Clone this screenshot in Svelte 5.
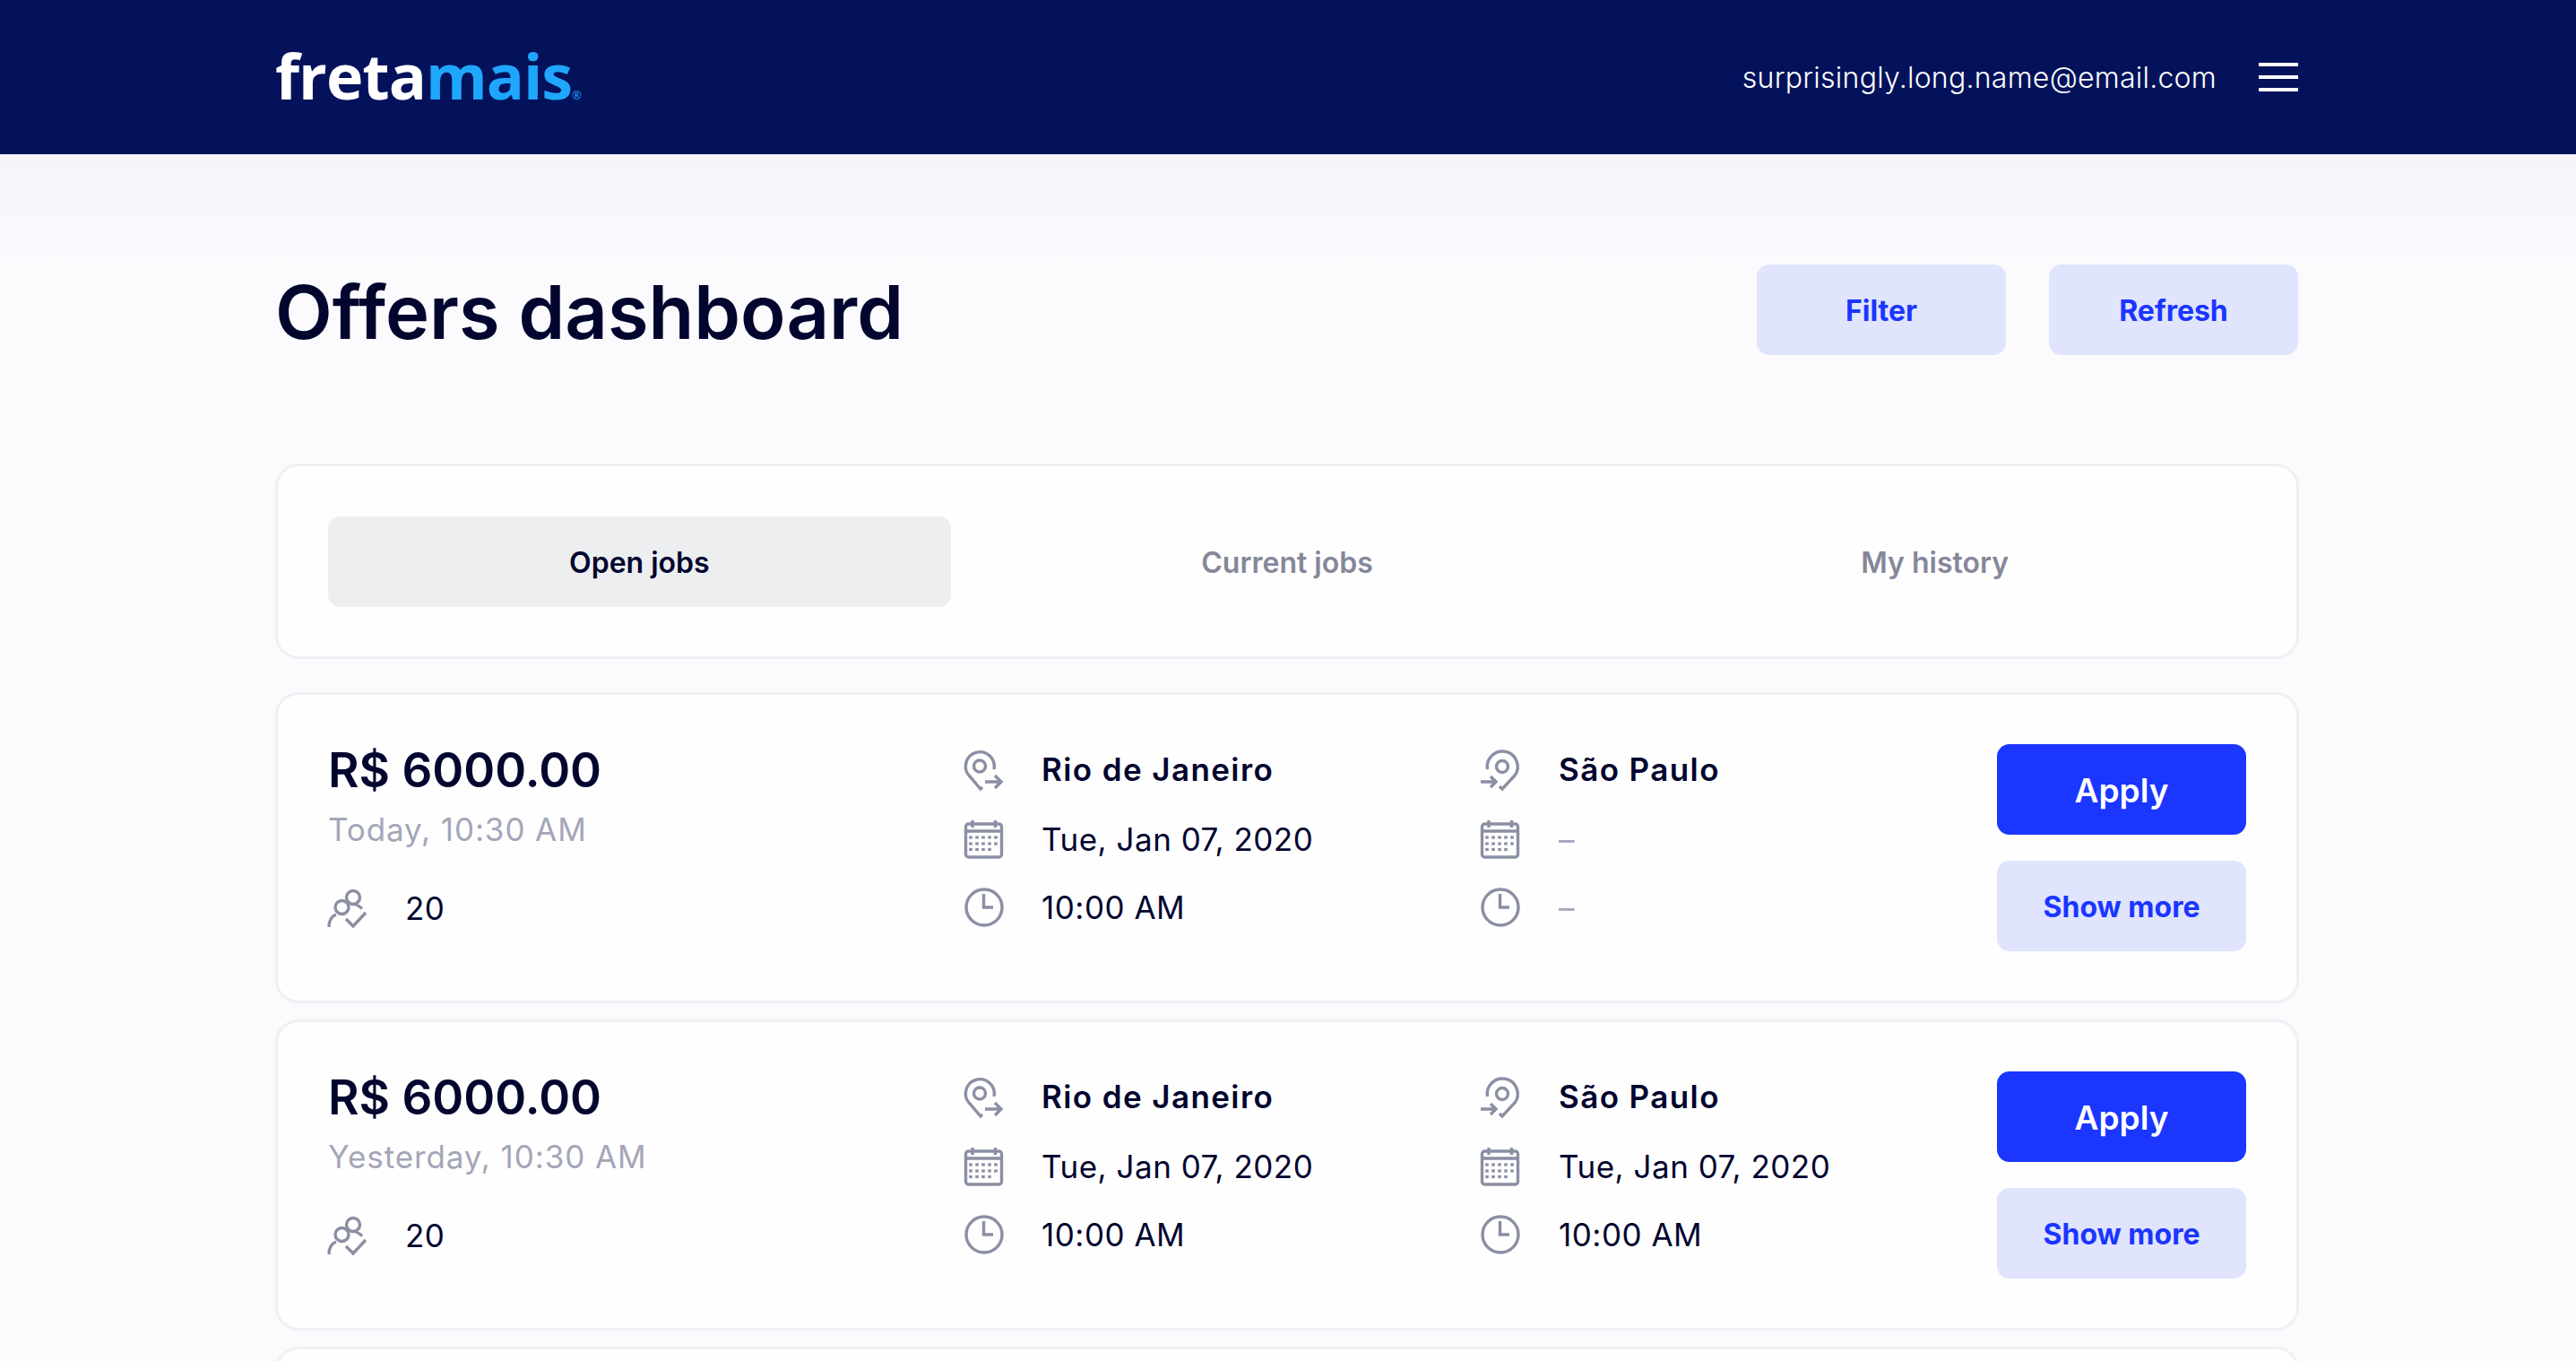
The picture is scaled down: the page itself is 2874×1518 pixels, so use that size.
<script lang="ts">
  interface Offer {
    posted: string;
    seats: number;
    origin: string;
    destination: string;
    startDate: string;
    startTime: string;
    endDate: string;
    endTime: string;
  }

  const tabs = ['Open jobs', 'Current jobs', 'My history'];
  let activeTab = $state('Open jobs');

  const offers: Offer[] = [
    { posted: 'Today, 10:30 AM', seats: 20, origin: 'Rio de Janeiro', destination: 'São Paulo', startDate: 'Tue, Jan 07, 2020', startTime: '10:00 AM', endDate: '–', endTime: '–' },
    { posted: 'Yesterday, 10:30 AM', seats: 20, origin: 'Rio de Janeiro', destination: 'São Paulo', startDate: 'Tue, Jan 07, 2020', startTime: '10:00 AM', endDate: 'Tue, Jan 07, 2020', endTime: '10:00 AM' },
  ];

  const calendarDots = [
    [7, 20], [14, 20], [21, 20], [28, 20], [35, 20],
    [7, 27], [14, 27], [21, 27], [28, 27], [35, 27],
    [7, 33.5], [14, 33.5], [21, 33.5], [28, 33.5],
  ];
</script>

{#snippet pinFrom()}
  <svg class="icon" viewBox="0 0 44 44">
    <path d="M33 21A16 16 0 1 0 6 29L18 43L20 41" />
    <circle cx="17" cy="17.5" r="6.5" />
    <path d="M23 35H41M34 28L41 35L34 42" />
  </svg>
{/snippet}

{#snippet pinTo()}
  <svg class="icon" viewBox="0 0 44 44">
    <path d="M7.5 21A17 17 0 1 1 38 28L24 43L21 40" />
    <circle cx="24" cy="18" r="6.5" />
    <path d="M0 35H17M11 29L17 35L11 41" />
  </svg>
{/snippet}

{#snippet calendar()}
  <svg class="icon" viewBox="0 0 44 44">
    <rect x="1.5" y="5" width="40" height="37" rx="3" />
    <path d="M1.5 13H41.5M9 1V9M34.5 1V9" />
    {#each calendarDots as [x, y]}
      <rect class="dot" x={x - 1.8} y={y - 1.6} width="3.6" height="3.2" />
    {/each}
  </svg>
{/snippet}

{#snippet clock()}
  <svg class="icon" viewBox="0 0 44 44">
    <circle cx="22" cy="22" r="20" />
    <path d="M21.5 7V22H32" />
  </svg>
{/snippet}

{#snippet usersCheck()}
  <svg class="icon" viewBox="0 0 44 44">
    <circle cx="28" cy="10" r="7.5" />
    <circle cx="15.5" cy="21" r="7.5" />
    <path d="M1 43C1 36 4 31 9 29M31 18C34 19 36 20.5 38 22.5M20 34L28 42L42 27" />
  </svg>
{/snippet}

<div class="page">
  <header class="topbar">
    <div class="topbar-inner">
      <div class="logo">freta<span class="logo-accent">mais</span><span class="logo-mark">®</span></div>
      <div class="account">
        <span class="email">surprisingly.long.name@email.com</span>
        <button class="menu" aria-label="Menu"><span></span><span></span><span></span></button>
      </div>
    </div>
  </header>

  <main class="content">
    <div class="title-row">
      <h1>Offers dashboard</h1>
      <div class="title-actions">
        <button class="btn btn-soft">Filter</button>
        <button class="btn btn-soft">Refresh</button>
      </div>
    </div>

    <nav class="card tabs">
      {#each tabs as tab}
        <button class="tab" class:active={activeTab === tab} onclick={() => (activeTab = tab)}>{tab}</button>
      {/each}
    </nav>

    <div class="offers">
      {#each offers as offer}
        <article class="card offer">
          <div class="summary">
            <div class="price">R$ 6000.00</div>
            <div class="posted">{offer.posted}</div>
            <div class="row seats">{@render usersCheck()}<span>{offer.seats}</span></div>
          </div>
          <div class="stops">
            <div class="row strong">{@render pinFrom()}<span>{offer.origin}</span></div>
            <div class="row">{@render calendar()}<span>{offer.startDate}</span></div>
            <div class="row">{@render clock()}<span>{offer.startTime}</span></div>
          </div>
          <div class="stops to">
            <div class="row strong">{@render pinTo()}<span>{offer.destination}</span></div>
            <div class="row">{@render calendar()}<span class:empty={offer.endDate === '–'}>{offer.endDate}</span></div>
            <div class="row">{@render clock()}<span class:empty={offer.endTime === '–'}>{offer.endTime}</span></div>
          </div>
          <div class="actions">
            <button class="btn btn-primary">Apply</button>
            <button class="btn btn-soft">Show more</button>
          </div>
        </article>
      {/each}
      <div class="card offer-next"></div>
    </div>
  </main>
</div>

<style>
  :global(body) {
    margin: 0;
    background: #fbfbfe;
    font-family: Inter, "Liberation Sans", sans-serif;
    color: #02052e;
  }

  .page {
    height: 100vh;
    overflow: hidden;
    background: linear-gradient(#f4f4fa 172px, #fbfbfe 300px);
  }

  .topbar {
    height: 172px;
    background: #03125a;
  }

  .topbar-inner {
    width: 2257px;
    height: 100%;
    margin-left: 307px;
    display: flex;
    align-items: center;
    justify-content: space-between;
  }

  .logo {
    font-family: "Open Sans", sans-serif;
    font-size: 70px;
    font-weight: 700;
    line-height: 1;
    letter-spacing: -1px;
    color: #fff;
    display: flex;
    align-items: baseline;
    padding-bottom: 4px;
  }

  .logo-accent {
    color: #1ea7fd;
  }

  .logo-mark {
    font-size: 13px;
    font-weight: 400;
    letter-spacing: 0;
    color: #1ea7fd;
  }

  .account {
    display: flex;
    align-items: center;
    gap: 47px;
  }

  .email {
    font-size: 32px;
    font-weight: 300;
    letter-spacing: 0.25px;
    color: #fff;
  }

  .menu {
    width: 44px;
    height: 32px;
    padding: 0;
    border: none;
    background: none;
    display: flex;
    flex-direction: column;
    justify-content: space-between;
  }

  .menu span {
    height: 4px;
    background: #fff;
  }

  .content {
    width: 2258px;
    margin-left: 307px;
  }

  .title-row {
    display: flex;
    align-items: center;
    justify-content: space-between;
    margin-top: 123px;
    padding-right: 1px;
  }

  h1 {
    margin: 6px 0 0;
    font-size: 83px;
    font-weight: 600;
    line-height: 95px;
  }

  .title-actions {
    display: flex;
    gap: 48px;
  }

  .btn {
    width: 278px;
    height: 101px;
    padding: 2px 0 0;
    border: none;
    border-radius: 14px;
    font-family: inherit;
    font-size: 32px;
    font-weight: 700;
  }

  .btn-soft {
    background: #e0e4fd;
    color: #1a36ff;
  }

  .btn-primary {
    background: #1a36ff;
    color: #fff;
    font-size: 37px;
    font-weight: 600;
  }

  .card {
    box-sizing: border-box;
    background: #fefeff;
    border: 3px solid #f0f0f4;
    border-radius: 26px;
  }

  .tabs {
    margin-top: 121px;
    padding: 56px 56px 55px;
    display: grid;
    grid-template-columns: repeat(3, 1fr);
    gap: 28px;
  }

  .tab {
    height: 101px;
    padding: 2px 0 0;
    border: none;
    border-radius: 14px;
    background: none;
    font-family: inherit;
    font-size: 32px;
    font-weight: 600;
    color: #85879a;
  }

  .tab.active {
    background: #edeef0;
    color: #02052e;
  }

  .offers {
    margin-top: 37px;
    display: flex;
    flex-direction: column;
    gap: 18px;
  }

  .offer {
    padding: 55px 56px;
    display: grid;
    grid-template-columns: 710px 576px 576px 278px;
  }

  .offer-next {
    height: 347px;
  }

  .price {
    font-size: 53px;
    font-weight: 600;
    line-height: 58px;
  }

  .posted {
    margin-top: 19px;
    font-size: 35px;
    letter-spacing: 0.9px;
    line-height: 36px;
    color: #a4a6b8;
  }

  .seats {
    margin-top: 41px;
    gap: 41px;
  }

  .stops {
    display: flex;
    flex-direction: column;
    gap: 18.5px;
  }

  .row {
    height: 58px;
    display: flex;
    align-items: center;
    gap: 42px;
    font-size: 35px;
    letter-spacing: 0.5px;
  }

  .stops.to .row {
    gap: 43px;
  }

  .row.strong {
    font-weight: 600;
    letter-spacing: 1.4px;
  }

  .row.strong span {
    margin-top: -2px;
  }

  .empty {
    color: #a4a6b8;
  }

  .icon {
    width: 44px;
    height: 44px;
    flex-shrink: 0;
    fill: none;
    stroke: #8b8fa3;
    stroke-width: 3.4;
    overflow: visible;
  }

  .icon .dot {
    fill: #8b8fa3;
    stroke: none;
  }

  .actions {
    display: flex;
    flex-direction: column;
    gap: 29px;
  }
</style>
